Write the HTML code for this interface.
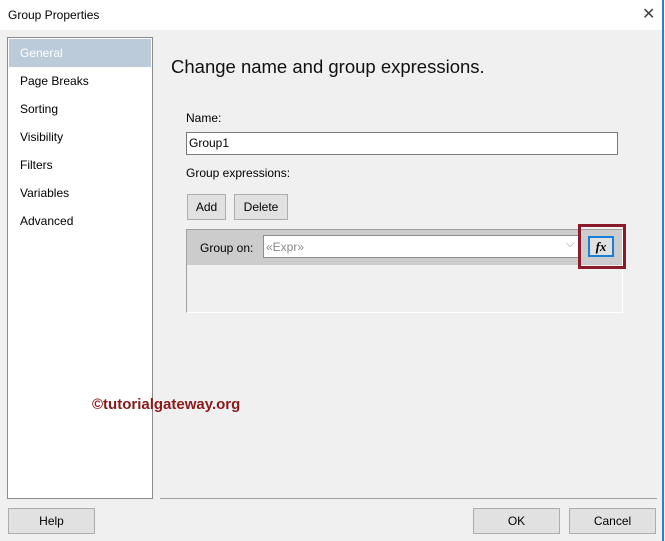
<!DOCTYPE html>
<html><head><style>
*{margin:0;padding:0;box-sizing:border-box}
body{width:665px;height:541px;background:#f0f0f0;position:relative;overflow:hidden;font-family:"Liberation Sans",sans-serif;font-size:12px;color:#000}
.a{position:absolute}
.btn{position:absolute;background:#e1e1e1;border:1px solid #adadad;text-align:center;font-size:12px}
</style></head><body>
<div class="a" style="left:0;top:0;width:665px;height:30px;background:#fff"></div>
<div class="a" style="left:8px;top:8px;font-size:12px">Group Properties</div>
<div class="a" style="left:642px;top:4px;font-size:16px;color:#444;font-weight:300">✕</div>
<div class="a" style="left:662px;top:0;width:2px;height:541px;background:#2b7fd0"></div>
<div class="a" style="left:7px;top:37px;width:146px;height:462px;background:#fff;border:1px solid #8c8c8c"></div>
<div class="a" style="left:9px;top:39px;width:142px;height:28px;background:#bccbd9"></div>
<div class="a" style="left:20px;top:46px;color:#fff">General</div>
<div class="a" style="left:20px;top:74px">Page Breaks</div>
<div class="a" style="left:20px;top:102px">Sorting</div>
<div class="a" style="left:20px;top:130px">Visibility</div>
<div class="a" style="left:20px;top:158px">Filters</div>
<div class="a" style="left:20px;top:186px">Variables</div>
<div class="a" style="left:20px;top:214px">Advanced</div>
<div class="a" style="left:171px;top:56px;font-size:18.5px;color:#111">Change name and group expressions.</div>
<div class="a" style="left:186px;top:111px">Name:</div>
<div class="a" style="left:186px;top:132px;width:432px;height:23px;background:#fff;border:1px solid #7a7a7a;padding:3px 2px">Group1</div>
<div class="a" style="left:186px;top:166px">Group expressions:</div>
<div class="btn" style="left:187px;top:194px;width:39px;height:26px;line-height:24px">Add</div>
<div class="btn" style="left:234px;top:194px;width:54px;height:26px;line-height:24px">Delete</div>
<div class="a" style="left:186px;top:229px;width:437px;height:84px;border:1px solid #fff;border-left-color:#a0a0a0;border-top-color:#a0a0a0"></div>
<div class="a" style="left:187px;top:230px;width:435px;height:35px;background:#cccccc"></div>
<div class="a" style="left:200px;top:241px">Group on:</div>
<div class="a" style="left:263px;top:235px;width:318px;height:23px;background:#fff;border:1px solid #8c8c8c;padding:4px 2px;color:#888">«Expr»</div>
<div class="a" style="left:566px;top:238px;color:#888;font-size:11px">⌵</div>
<div class="a" style="left:578px;top:224px;width:48px;height:45px;border:3px solid #8b1a2b"></div>
<div class="a" style="left:588px;top:236px;width:26px;height:21px;border:2px solid #1a7ed6;background:#e1e1e1;text-align:center;font:bold italic 13px 'Liberation Serif',serif;line-height:17px">fx</div>
<div class="a" style="left:92px;top:396px;font-weight:bold;font-size:15px;color:#8b1a1a">©tutorialgateway.org</div>
<div class="a" style="left:160px;top:498px;width:497px;height:1px;background:#a0a0a0"></div>
<div class="btn" style="left:8px;top:508px;width:87px;height:26px;line-height:24px">Help</div>
<div class="btn" style="left:473px;top:508px;width:87px;height:26px;line-height:24px">OK</div>
<div class="btn" style="left:569px;top:508px;width:87px;height:26px;line-height:24px">Cancel</div>
</body></html>
